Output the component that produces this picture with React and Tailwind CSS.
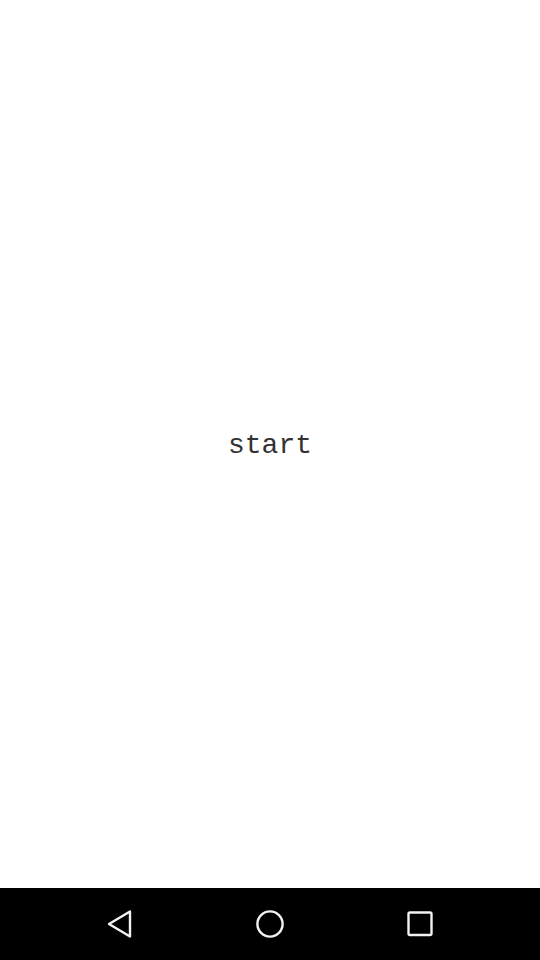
import React from "react";

function NavBar() {
  return (
    <div className="h-[72px] bg-black flex items-center justify-center">
      <div className="w-[150px] flex justify-center">
        <svg width="28" height="30" viewBox="0 0 28 30">
          <path d="M24 2.5 L3 15 L24 27.5 Z" fill="none" stroke="#f2f2f2" strokeWidth="2.4" strokeLinejoin="round" />
        </svg>
      </div>
      <div className="w-[150px] flex justify-center">
        <svg width="30" height="30" viewBox="0 0 30 30">
          <circle cx="15" cy="15" r="12.6" fill="none" stroke="#f2f2f2" strokeWidth="2.4" />
        </svg>
      </div>
      <div className="w-[150px] flex justify-center">
        <svg width="28" height="28" viewBox="0 0 28 28">
          <rect x="2.5" y="2.5" width="23" height="22.5" rx="1.5" fill="none" stroke="#f2f2f2" strokeWidth="2.4" />
        </svg>
      </div>
    </div>
  );
}

export default function App() {
  return (
    <div className="w-[540px] h-[960px] flex flex-col bg-white">
      <div className="flex-1 flex items-center justify-center pt-[4px]">
        <span className="text-[28px] leading-none text-[#333] font-['Liberation_Mono',monospace]">start</span>
      </div>
      <NavBar />
    </div>
  );
}
